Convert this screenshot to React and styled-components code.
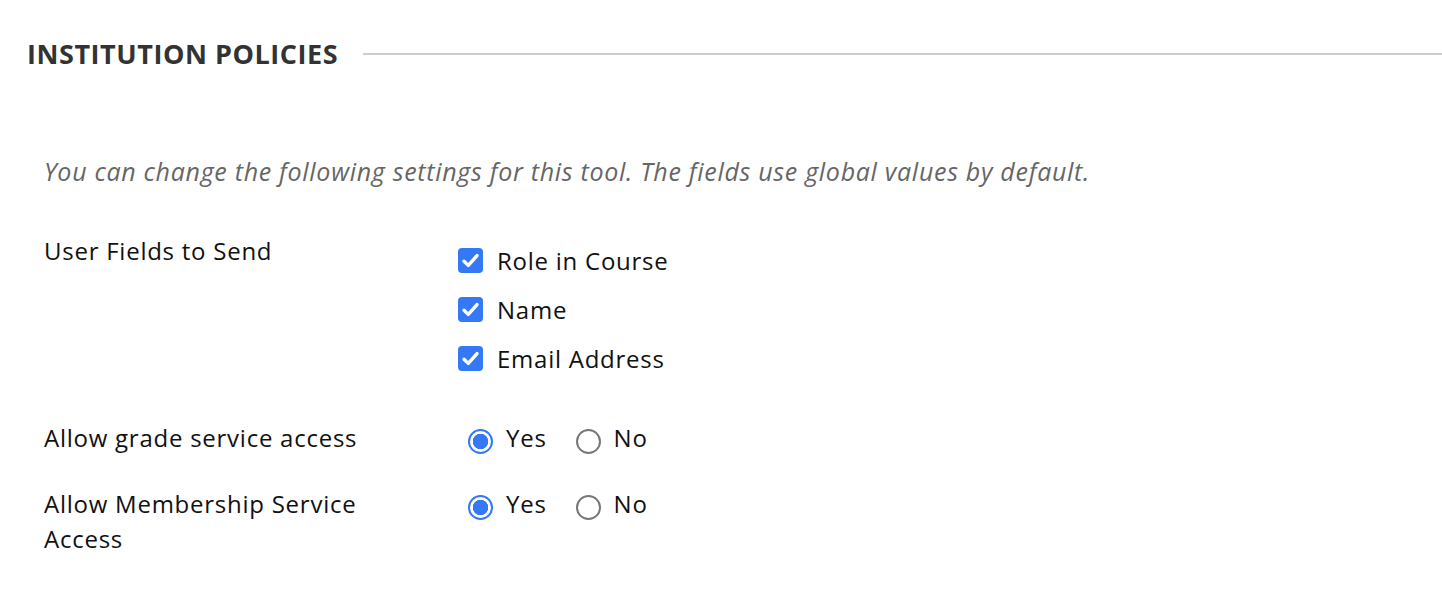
import React from "react";
import styled, { createGlobalStyle } from "styled-components";

const GlobalStyle = createGlobalStyle`
  html, body {
    margin: 0;
    padding: 0;
    background: #fff;
    font-family: "Open Sans", "Noto Sans", sans-serif;
  }
`;

const userFields = ["Role in Course", "Name", "Email Address"];

const Check = () => (
  <CheckBox>
    <svg width="25" height="25" viewBox="0 0 25 25">
      <path
        d="M6 13.2 L10.3 17.4 L19 7.6"
        fill="none"
        stroke="#fff"
        strokeWidth="3.4"
        strokeLinecap="round"
        strokeLinejoin="round"
      />
    </svg>
  </CheckBox>
);

const YesNo = ({ value }) => (
  <RadioRow>
    <RadioOption>
      <Radio checked={value} />
      Yes
    </RadioOption>
    <RadioOption>
      <Radio checked={!value} />
      No
    </RadioOption>
  </RadioRow>
);

const App = () => {
  return (
    <>
      <GlobalStyle />
      <Page>
        <Header>
          <h2>INSTITUTION POLICIES</h2>
          <Rule />
        </Header>
        <Intro>
          You can change the following settings for this tool. The fields use
          global values by default.
        </Intro>
        <Form>
          <Field>
            <Label>User Fields to Send</Label>
            <CheckList>
              {userFields.map((f) => (
                <CheckItem key={f}>
                  <Check />
                  {f}
                </CheckItem>
              ))}
            </CheckList>
          </Field>
          <Field>
            <Label>Allow grade service access</Label>
            <YesNo value={true} />
          </Field>
          <Field>
            <Label>Allow Membership Service Access</Label>
            <YesNo value={true} />
          </Field>
        </Form>
      </Page>
    </>
  );
};

const Page = styled.div`
  padding: 36px 0 0 27px;
`;

const Header = styled.div`
  display: flex;
  align-items: center;
  gap: 25px;
  h2 {
    margin: 0;
    font-size: 27px;
    line-height: 35px;
    font-weight: 700;
    letter-spacing: 0.55px;
    color: #333;
    white-space: nowrap;
  }
`;

const Rule = styled.div`
  flex: 1;
  height: 2px;
  background: #cdcdcd;
`;

const Intro = styled.p`
  margin: 84px 0 0 17px;
  font-size: 25px;
  line-height: 33px;
  letter-spacing: 0.7px;
  font-style: italic;
  color: #666;
`;

const Form = styled.div`
  display: flex;
  flex-direction: column;
  gap: 31px;
  margin: 45px 0 0 17px;
`;

const Field = styled.div`
  display: grid;
  grid-template-columns: 350px 1fr;
  column-gap: 64px;
  align-items: start;
  font-size: 24px;
  line-height: 35px;
  letter-spacing: 0.75px;
  color: #111;
`;

const Label = styled.div``;

const CheckList = styled.div`
  display: flex;
  flex-direction: column;
  gap: 14px;
  padding: 10px 0 13px;
`;

const CheckItem = styled.label`
  display: flex;
  align-items: center;
  gap: 14px;
`;

const CheckBox = styled.span`
  display: flex;
  width: 25px;
  height: 25px;
  border-radius: 4px;
  background: #3478f6;
`;

const RadioRow = styled.div`
  display: flex;
  align-items: center;
  gap: 29px;
  padding-left: 10px;
`;

const RadioOption = styled.label`
  display: flex;
  align-items: center;
  gap: 13px;
`;

const Radio = styled.span`
  box-sizing: border-box;
  width: 25px;
  height: 25px;
  margin-top: 8px;
  border-radius: 50%;
  border: ${(p) => (p.checked ? "2.5px solid #3478f6" : "2px solid #777")};
  background: ${(p) =>
    p.checked
      ? "radial-gradient(circle, #3478f6 0 7.5px, #fff 8px)"
      : "#fff"};
`;

export default App;
